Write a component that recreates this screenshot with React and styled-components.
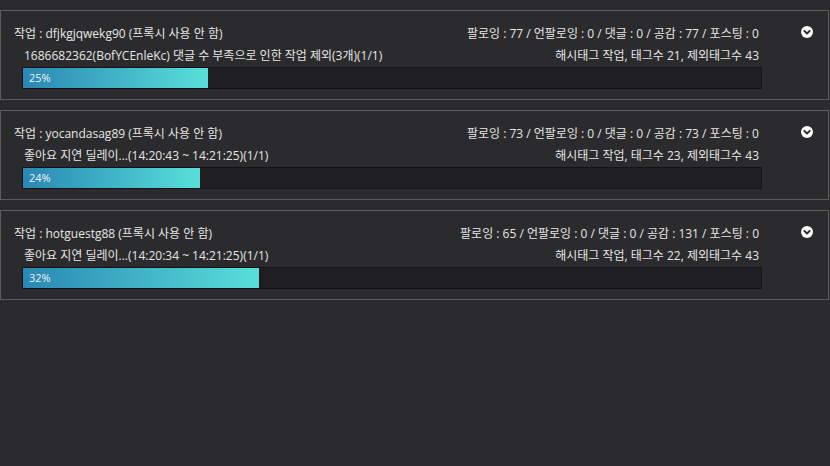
import React from "react";
import styled, { createGlobalStyle } from "styled-components";

const Global = createGlobalStyle`
  html, body { margin: 0; padding: 0; background: #2b2b2d; }
  body { font-family: "Open Sans", "Noto Sans CJK KR", sans-serif; color: #e6e6e6; }
  * { box-sizing: border-box; }
`;

const Page = styled.div`
  width: 830px;
  height: 466px;
  background: #2b2b2d;
  padding-top: 10px;
  display: flex;
  flex-direction: column;
  gap: 10px;
`;

const Panel = styled.section`
  width: 829px;
  height: 90px;
  border: 1px solid #5c5c5c;
  display: flex;
`;

const Main = styled.div`
  width: 761px;
  padding-top: 16px;
  display: flex;
  flex-direction: column;
`;

const Row = styled.div`
  display: flex;
  justify-content: space-between;
  align-items: center;
  height: 14px;
  font-size: 12px;
  line-height: 14px;
  white-space: nowrap;
  padding-right: 3px;
  padding-left: ${(p) => p.$indent}px;
  margin-bottom: ${(p) => p.$gap}px;
`;

const Bar = styled.div`
  margin-left: 21px;
  width: 740px;
  height: 22px;
  background: #1f1f21;
  border: 1px solid #141416;
  position: relative;
`;

const Fill = styled.div`
  height: 100%;
  background: linear-gradient(90deg, #2a87b3 0%, #58dfda 100%);
`;

const Percent = styled.span`
  position: absolute;
  left: 6px;
  top: 0;
  line-height: 20px;
  font-size: 11px;
  color: #f2f2f2;
`;

const Side = styled.div`
  flex: 1;
  display: flex;
  justify-content: flex-start;
  padding-top: 15px;
  padding-left: 39px;
`;

const Chevron = () => (
  <svg width="12" height="12" viewBox="0 0 12 12">
    <circle cx="6" cy="6" r="6" fill="#ffffff" />
    <path d="M3.3 4.8 L6 7.5 L8.7 4.8" stroke="#2b2b2d" strokeWidth="1.9" fill="none" strokeLinecap="round" strokeLinejoin="round" />
  </svg>
);

const data = [
  {
    id: "dfjkgjqwekg90",
    stats: "팔로잉 : 77 / 언팔로잉 : 0 / 댓글 : 0 / 공감 : 77 / 포스팅 : 0",
    status: "1686682362(BofYCEnleKc) 댓글 수 부족으로 인한 작업 제외(3개)(1/1)",
    tags: "해시태그 작업, 태그수 21, 제외태그수 43",
    pct: 25,
  },
  {
    id: "yocandasag89",
    stats: "팔로잉 : 73 / 언팔로잉 : 0 / 댓글 : 0 / 공감 : 73 / 포스팅 : 0",
    status: "좋아요 지연 딜레이...(14:20:43 ~ 14:21:25)(1/1)",
    tags: "해시태그 작업, 태그수 23, 제외태그수 43",
    pct: 24,
  },
  {
    id: "hotguestg88",
    stats: "팔로잉 : 65 / 언팔로잉 : 0 / 댓글 : 0 / 공감 : 131 / 포스팅 : 0",
    status: "좋아요 지연 딜레이...(14:20:34 ~ 14:21:25)(1/1)",
    tags: "해시태그 작업, 태그수 22, 제외태그수 43",
    pct: 32,
  },
];

export default function App() {
  return (
    <>
      <Global />
      <Page>
        {data.map((d) => (
          <Panel key={d.id}>
            <Main>
              <Row $indent={13} $gap={8}>
                <span>작업 : {d.id} (프록시 사용 안 함)</span>
                <span>{d.stats}</span>
              </Row>
              <Row $indent={23} $gap={4}>
                <span>{d.status}</span>
                <span>{d.tags}</span>
              </Row>
              <Bar>
                <Fill style={{ width: `${d.pct}%` }} />
                <Percent>{d.pct}%</Percent>
              </Bar>
            </Main>
            <Side>
              <Chevron />
            </Side>
          </Panel>
        ))}
      </Page>
    </>
  );
}
